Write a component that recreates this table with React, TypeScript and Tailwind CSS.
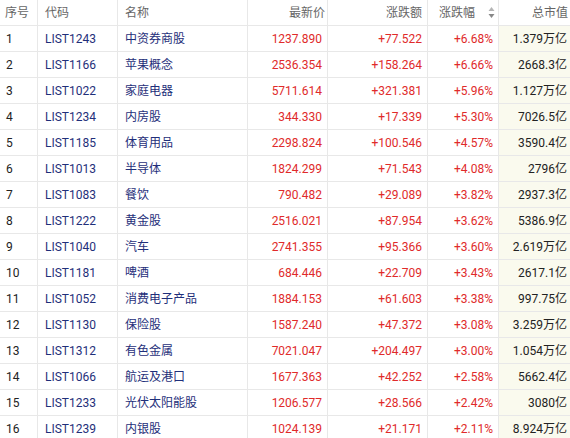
import React from 'react';

interface Row {
    code: string;
    name: string;
    price: string;
    change: string;
    pct: string;
    cap: string;
}

const rows: Row[] = [
    { code: 'LIST1243', name: '中资券商股', price: '1237.890', change: '+77.522', pct: '+6.68%', cap: '1.379万亿' },
    { code: 'LIST1166', name: '苹果概念', price: '2536.354', change: '+158.264', pct: '+6.66%', cap: '2668.3亿' },
    { code: 'LIST1022', name: '家庭电器', price: '5711.614', change: '+321.381', pct: '+5.96%', cap: '1.127万亿' },
    { code: 'LIST1234', name: '内房股', price: '344.330', change: '+17.339', pct: '+5.30%', cap: '7026.5亿' },
    { code: 'LIST1185', name: '体育用品', price: '2298.824', change: '+100.546', pct: '+4.57%', cap: '3590.4亿' },
    { code: 'LIST1013', name: '半导体', price: '1824.299', change: '+71.543', pct: '+4.08%', cap: '2796亿' },
    { code: 'LIST1083', name: '餐饮', price: '790.482', change: '+29.089', pct: '+3.82%', cap: '2937.3亿' },
    { code: 'LIST1222', name: '黄金股', price: '2516.021', change: '+87.954', pct: '+3.62%', cap: '5386.9亿' },
    { code: 'LIST1040', name: '汽车', price: '2741.355', change: '+95.366', pct: '+3.60%', cap: '2.619万亿' },
    { code: 'LIST1181', name: '啤酒', price: '684.446', change: '+22.709', pct: '+3.43%', cap: '2617.1亿' },
    { code: 'LIST1052', name: '消费电子产品', price: '1884.153', change: '+61.603', pct: '+3.38%', cap: '997.75亿' },
    { code: 'LIST1130', name: '保险股', price: '1587.240', change: '+47.372', pct: '+3.08%', cap: '3.259万亿' },
    { code: 'LIST1312', name: '有色金属', price: '7021.047', change: '+204.497', pct: '+3.00%', cap: '1.054万亿' },
    { code: 'LIST1066', name: '航运及港口', price: '1677.363', change: '+42.252', pct: '+2.58%', cap: '5662.4亿' },
    { code: 'LIST1233', name: '光伏太阳能股', price: '1206.577', change: '+28.566', pct: '+2.42%', cap: '3080亿' },
    { code: 'LIST1239', name: '内银股', price: '1024.139', change: '+21.171', pct: '+2.11%', cap: '8.924万亿' },
];

const grid = 'grid grid-cols-[38px_80px_130px_80px_100px_71px_71px]';
const cell = 'h-[26px] flex items-center border-r border-b border-[#e8e8e8]';

function SortIcon() {
    return (
        <svg width="7" height="13" viewBox="0 0 7 13" className="ml-auto mr-[3px]">
            <path d="M3.5 1 L6.5 5 L0.5 5 Z" fill="#b5b5b5" />
            <path d="M3.5 12 L6.5 8 L0.5 8 Z" fill="#888" />
        </svg>
    );
}

export default function App() {
    return (
        <div
            className="w-[570px] h-[438px] overflow-hidden bg-white text-[12px]"
            style={{ fontFamily: 'Roboto, "Noto Sans CJK SC", sans-serif' }}
        >
            <div className={`${grid} text-[#666]`}>
                <div className={`${cell} h-[25px] pl-[5px]`}>序号</div>
                <div className={`${cell} h-[25px] pl-[7px]`}>代码</div>
                <div className={`${cell} h-[25px] pl-[7px]`}>名称</div>
                <div className={`${cell} h-[25px] justify-end pr-[2px]`}>最新价</div>
                <div className={`${cell} h-[25px] justify-end pr-[5px]`}>涨跌额</div>
                <div className={`${cell} h-[25px] pl-[11px]`}>
                    涨跌幅
                    <SortIcon />
                </div>
                <div className={`${cell} h-[25px] justify-end pr-[2px] border-r-0`}>总市值</div>
            </div>
            {rows.map((r, i) => (
                <div key={r.code} className={grid}>
                    <div className={`${cell} pl-[6px] text-[#222]`}>{i + 1}</div>
                    <div className={`${cell} pl-[7px] text-[#1f2f7a]`}>{r.code}</div>
                    <div className={`${cell} pl-[7px] text-[#1f2f7a]`}>{r.name}</div>
                    <div className={`${cell} justify-end pr-[5px] text-[#e02a2a]`}>{r.price}</div>
                    <div className={`${cell} justify-end pr-[5px] text-[#e02a2a]`}>{r.change}</div>
                    <div className={`${cell} justify-end pr-[5px] text-[#e02a2a]`}>{r.pct}</div>
                    <div className={`${cell} justify-end pr-[3px] border-r-0 bg-[#fafaee] text-[#222]`}>{r.cap}</div>
                </div>
            ))}
        </div>
    );
}
